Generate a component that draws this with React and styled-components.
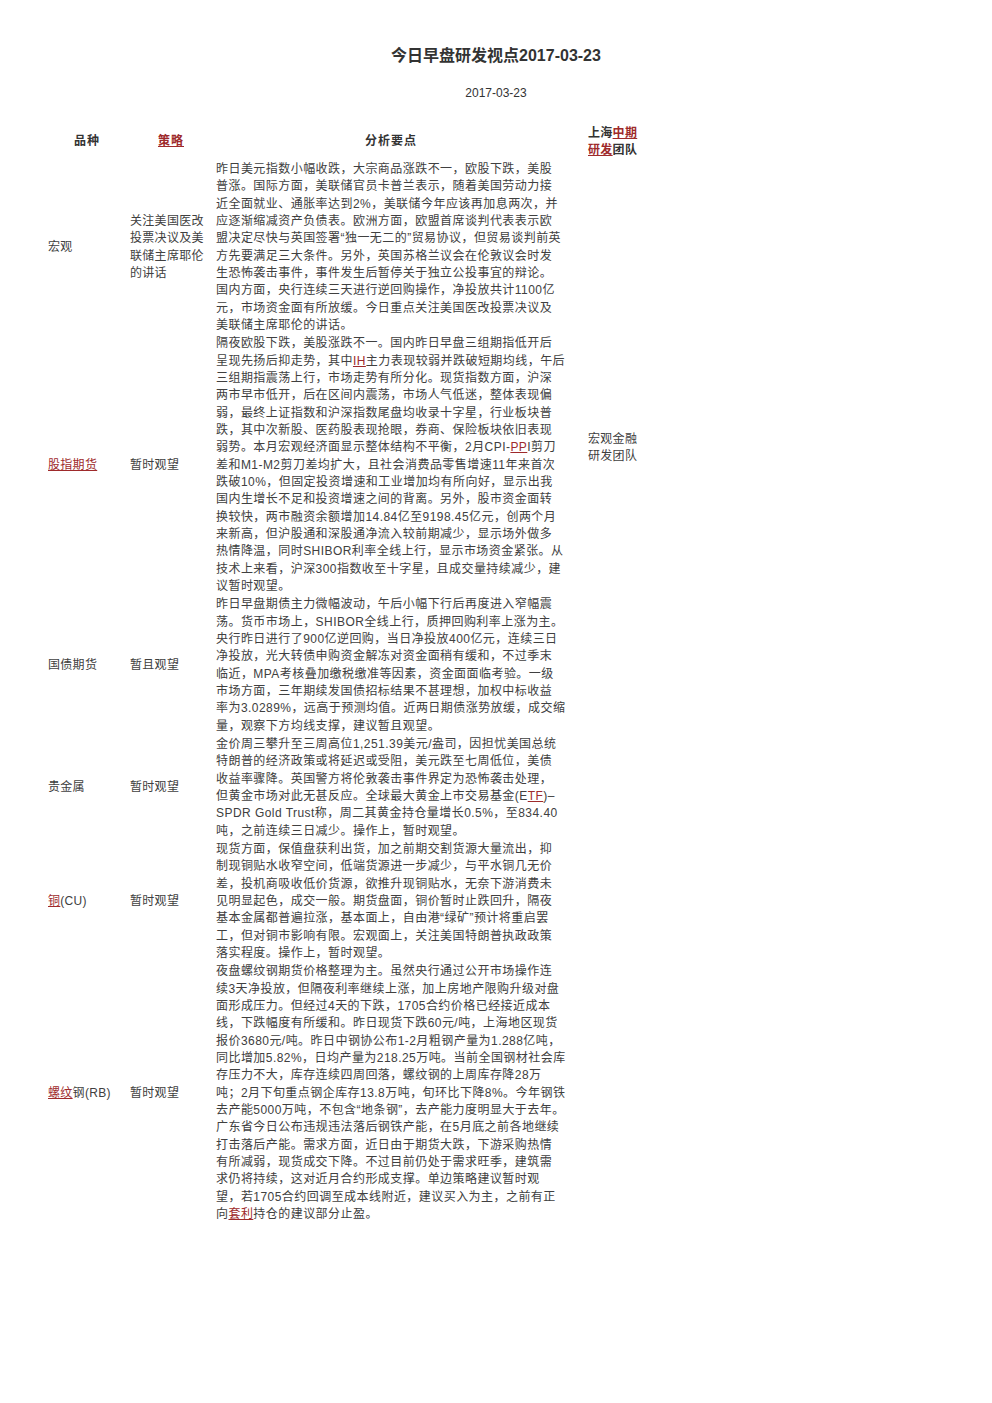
import React from "react";
import styled, { createGlobalStyle } from "styled-components";

const GlobalStyle = createGlobalStyle`
    body {
        margin: 0;
        background: #ffffff;
        font-family: "Liberation Sans", "Noto Sans CJK SC", sans-serif;
        color: #404040;
    }
`

const Page = styled.div`
    width: 992px;
    min-height: 1403px;
    padding-top: 46px;
    box-sizing: border-box;
`
const Title = styled.h1`
    margin: 0;
    text-align: center;
    font-size: 16px;
    line-height: 20px;
    font-weight: 700;
    color: #333333;
`
const DateLine = styled.div`
    margin-top: 19px;
    text-align: center;
    font-size: 12px;
    line-height: 16px;
    color: #333333;
`
const Table = styled.table`
    margin: 22px 0 0 46px;
    border-collapse: collapse;
    border-spacing: 0;
    table-layout: fixed;
    font-size: 12px;
    line-height: 17.33px;
`
const Col = styled.col`
    width: ${(p) => p.$w}px;
`
const Head = styled.th`
    padding: 1.5px 2px;
    font-weight: 700;
    color: #333333;
    letter-spacing: ${(p) => (p.$wide ? "1px" : "0.3px")};
    text-align: ${(p) => p.$align || "center"};
    padding-left: ${(p) => p.$padLeft || 2}px;
    vertical-align: middle;
`
const Cell = styled.td`
    padding: 0.5px 2px;
    padding-left: ${(p) => p.$padLeft || 2}px;
    vertical-align: ${(p) => p.$valign || "middle"};
    letter-spacing: 0.3px;
`
const Line = styled.span`
    display: block;
    white-space: nowrap;
    letter-spacing: 0.45px;
`
const A = styled.a`
    color: #9e2a2b;
    text-decoration: underline;
`

const macro = [
    "昨日美元指数小幅收跌，大宗商品涨跌不一，欧股下跌，美股",
    "普涨。国际方面，美联储官员卡普兰表示，随着美国劳动力接",
    "近全面就业、通胀率达到2%，美联储今年应该再加息两次，并",
    "应逐渐缩减资产负债表。欧洲方面，欧盟首席谈判代表表示欧",
    "盟决定尽快与英国签署“独一无二的”贸易协议，但贸易谈判前英",
    "方先要满足三大条件。另外，英国苏格兰议会在伦敦议会时发",
    "生恐怖袭击事件，事件发生后暂停关于独立公投事宜的辩论。",
    "国内方面，央行连续三天进行逆回购操作，净投放共计1100亿",
    "元，市场资金面有所放缓。今日重点关注美国医改投票决议及",
    "美联储主席耶伦的讲话。",
]

const stock = [
    "隔夜欧股下跌，美股涨跌不一。国内昨日早盘三组期指低开后",
    <>呈现先扬后抑走势，其中<A href="#">IH</A>主力表现较弱并跌破短期均线，午后</>,
    "三组期指震荡上行，市场走势有所分化。现货指数方面，沪深",
    "两市早市低开，后在区间内震荡，市场人气低迷，整体表现偏",
    "弱，最终上证指数和沪深指数尾盘均收录十字星，行业板块普",
    "跌，其中次新股、医药股表现抢眼，券商、保险板块依旧表现",
    <>弱势。本月宏观经济面显示整体结构不平衡，2月CPI-<A href="#">PP</A>I剪刀</>,
    "差和M1-M2剪刀差均扩大，且社会消费品零售增速11年来首次",
    "跌破10%，但固定投资增速和工业增加均有所向好，显示出我",
    "国内生增长不足和投资增速之间的背离。另外，股市资金面转",
    "换较快，两市融资余额增加14.84亿至9198.45亿元，创两个月",
    "来新高，但沪股通和深股通净流入较前期减少，显示场外做多",
    "热情降温，同时SHIBOR利率全线上行，显示市场资金紧张。从",
    "技术上来看，沪深300指数收至十字星，且成交量持续减少，建",
    "议暂时观望。",
]

const bonds = [
    "昨日早盘期债主力微幅波动，午后小幅下行后再度进入窄幅震",
    "荡。货币市场上，SHIBOR全线上行，质押回购利率上涨为主。",
    "央行昨日进行了900亿逆回购，当日净投放400亿元，连续三日",
    "净投放，光大转债申购资金解冻对资金面稍有缓和，不过季末",
    "临近，MPA考核叠加缴税缴准等因素，资金面面临考验。一级",
    "市场方面，三年期续发国债招标结果不甚理想，加权中标收益",
    "率为3.0289%，远高于预测均值。近两日期债涨势放缓，成交缩",
    "量，观察下方均线支撑，建议暂且观望。",
]

const metals = [
    "金价周三攀升至三周高位1,251.39美元/盎司，因担忧美国总统",
    "特朗普的经济政策或将延迟或受阻，美元跌至七周低位，美债",
    "收益率骤降。英国警方将伦敦袭击事件界定为恐怖袭击处理，",
    <>但黄金市场对此无甚反应。全球最大黄金上市交易基金(E<A href="#">TF</A>)–</>,
    "SPDR Gold Trust称，周二其黄金持仓量增长0.5%，至834.40",
    "吨，之前连续三日减少。操作上，暂时观望。",
]

const copper = [
    "现货方面，保值盘获利出货，加之前期交割货源大量流出，抑",
    "制现铜贴水收窄空间，低端货源进一步减少，与平水铜几无价",
    "差，投机商吸收低价货源，欲推升现铜贴水，无奈下游消费未",
    "见明显起色，成交一般。期货盘面，铜价暂时止跌回升，隔夜",
    "基本金属都普遍拉涨，基本面上，自由港“绿矿”预计将重启罢",
    "工，但对铜市影响有限。宏观面上，关注美国特朗普执政政策",
    "落实程度。操作上，暂时观望。",
]

const rebar = [
    "夜盘螺纹钢期货价格整理为主。虽然央行通过公开市场操作连",
    "续3天净投放，但隔夜利率继续上涨，加上房地产限购升级对盘",
    "面形成压力。但经过4天的下跌，1705合约价格已经接近成本",
    "线，下跌幅度有所缓和。昨日现货下跌60元/吨，上海地区现货",
    "报价3680元/吨。昨日中钢协公布1-2月粗钢产量为1.288亿吨，",
    "同比增加5.82%，日均产量为218.25万吨。当前全国钢材社会库",
    "存压力不大，库存连续四周回落，螺纹钢的上周库存降28万",
    "吨；2月下旬重点钢企库存13.8万吨，旬环比下降8%。今年钢铁",
    "去产能5000万吨，不包含“地条钢”，去产能力度明显大于去年。",
    "广东省今日公布违规违法落后钢铁产能，在5月底之前各地继续",
    "打击落后产能。需求方面，近日由于期货大跌，下游采购热情",
    "有所减弱，现货成交下降。不过目前仍处于需求旺季，建筑需",
    "求仍将持续，这对近月合约形成支撑。单边策略建议暂时观",
    "望，若1705合约回调至成本线附近，建议买入为主，之前有正",
    <>向<A href="#">套利</A>持仓的建议部分止盈。</>,
]

const rows = [
    { name: "宏观", strategy: "关注美国医改投票决议及美联储主席耶伦的讲话", lines: macro },
    { name: <A href="#">股指期货</A>, strategy: "暂时观望", lines: stock },
    { name: "国债期货", strategy: "暂且观望", lines: bonds },
    { name: "贵金属", strategy: "暂时观望", lines: metals },
    { name: <><A href="#">铜</A>(CU)</>, strategy: "暂时观望", lines: copper },
    { name: <><A href="#">螺纹</A>钢(RB)</>, strategy: "暂时观望", lines: rebar },
]

const App = () => {
    return(
        <Page>
            <GlobalStyle />
            <Title>今日早盘研发视点2017-03-23</Title>
            <DateLine>2017-03-23</DateLine>
            <Table>
                <colgroup>
                    <Col $w={82} />
                    <Col $w={86} />
                    <Col $w={354} />
                    <Col $w={76} />
                </colgroup>
                <thead>
                    <tr>
                        <Head $wide>品种</Head>
                        <Head $wide><A href="#">策略</A></Head>
                        <Head $wide>分析要点</Head>
                        <Head $align="left" $padLeft={20}>
                            上海<A href="#">中期</A><A href="#">研发</A>团队
                        </Head>
                    </tr>
                </thead>
                <tbody>
                    {rows.map((row, i) => (
                        <tr key={i}>
                            <Cell>{row.name}</Cell>
                            <Cell>{row.strategy}</Cell>
                            <Cell $valign="top">
                                {row.lines.map((line, j) => (
                                    <Line key={j}>{line}</Line>
                                ))}
                            </Cell>
                            {i === 0 && (
                                <Cell rowSpan={3} $padLeft={20}>宏观金融研发团队</Cell>
                            )}
                        </tr>
                    ))}
                </tbody>
            </Table>
        </Page>
    )
}

export default App
